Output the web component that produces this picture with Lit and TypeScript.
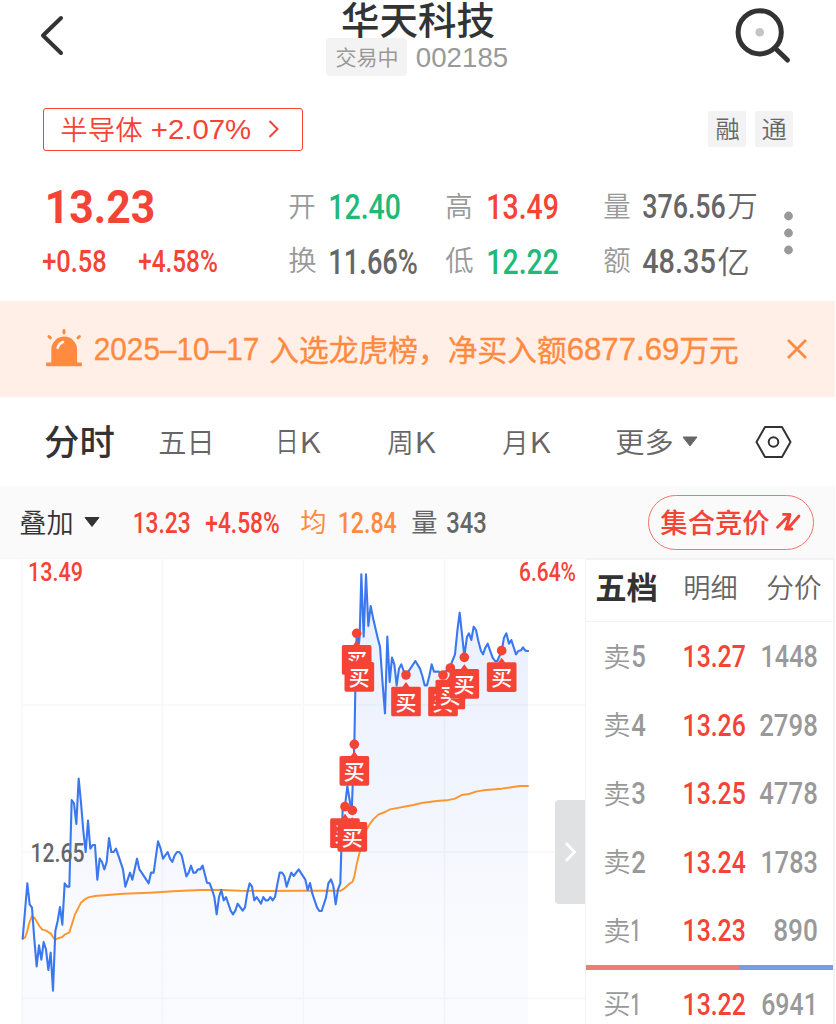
import { LitElement, html, svg, css } from "lit";
import { customElement } from "lit/decorators.js";

type Kind = "din" | "sans" | "cjk";

/* Proportions of each face: cap height and side bearing, in em. */
const FACE = {
  din: { cap: 0.711, bearing: 0.03, one: 0.055 },
  sans: { cap: 0.7, bearing: 0.05, one: 0.07 },
  cjk: { cap: 0.76, bearing: 0.03, one: 0.03 },
};

/* A run of text fitted to a given width; its box is the height of the capitals. */
function fit(text: string, width: number, size: number, cls = "", kind: Kind = "din") {
  const f = FACE[kind];
  const left = (text[0] === "1" ? f.one : f.bearing) * size * 0.85;
  const right = f.bearing * size * 0.85;
  const h = f.cap * size;
  return html`<svg class="fit ${kind} ${cls}" width=${width} height=${h}>
    <text x=${-left} y=${h} font-size=${size} textLength=${width + left + right}
      lengthAdjust="spacingAndGlyphs">${text}</text>
  </svg>`;
}
const zh = (text: string, width: number, size: number, cls = "") => fit(text, width, size, cls, "cjk");

const textStyles = css`
  .fit { display: block; overflow: visible; fill: currentColor; flex: none; }
  .din { font-family: Roboto, sans-serif; font-weight: 500; }
  .sans { font-family: "Liberation Sans", Arial, sans-serif; font-weight: 400; }
  .cjk { font-family: "Noto Sans CJK SC", sans-serif; font-weight: 350; }
  .regular { font-weight: 400; }
  .medium { font-weight: 500; }
  .bold { font-weight: 700; }
  .red { color: #f54336; }
  .green { color: #1fb978; }
  .dark { color: #333; }
  .mid { color: #666; }
  .gray { color: #999; }
  .orange { color: #ff8a40; }
`;

/* Chart series, in thirds of a pixel. */
const PRICE = `68,1148 75,1065 82,982 89,1045 96,1055 103,1150 110,1231 117,1168 124,1211 131,1158 138,1180 145,1242 152,1190 159,1304 166,1125 173,1095 180,1053 187,1106 194,982 201,992 208,992 215,732 222,742 229,804 236,668 243,740 250,825 257,888 264,794 271,878 278,867 285,867 292,971 299,908 306,918 313,940 320,918 327,846 334,888 341,888 348,878 355,898 369,940 376,992 390,950 397,971 411,908 418,940 425,950 446,982 453,950 461,950 474,856 482,878 489,908 503,888 510,908 517,918 524,898 531,888 538,888 545,898 559,961 566,950 573,929 580,950 587,950 594,940 601,940 608,929 621,980 629,982 636,1000 643,1023 650,1075 657,1023 664,1002 671,1033 678,1023 692,1064 699,1075 706,1064 713,1043 728,1064 735,1054 742,1010 749,982 756,992 763,1033 770,1023 783,1043 790,1023 797,1033 804,1033 811,1023 818,1033 825,1023 832,985 839,950 846,950 853,960 860,992 867,970 874,950 881,960 896,940 916,971 923,1002 930,981 937,1013 951,1054 958,1065 965,1065 978,1025 985,982 993,970 1000,990 1007,1045 1014,1000 1021,982 1024,880 1028,760 1035,750 1042,690 1055,770 1058,690 1063,565 1066,400 1070,232 1077,262 1079,240 1084,55 1091,242 1098,55 1105,210 1112,150 1120,190 1134,250 1140,272 1148,385 1155,472 1162,242 1169,378 1176,305 1183,325 1190,388 1197,338 1204,325 1211,345 1218,357 1225,347 1246,315 1260,338 1267,360 1274,388 1281,388 1288,360 1295,325 1302,347 1316,347 1329,357 1338,345 1351,330 1365,295 1372,225 1379,170 1386,235 1393,300 1401,242 1407,232 1414,252 1421,212 1428,222 1435,255 1443,285 1449,295 1456,275 1463,263 1470,283 1478,305 1485,315 1492,315 1505,285 1512,245 1519,232 1527,263 1534,252 1548,295 1555,285 1563,283 1569,274 1576,284 1584,285`;
const AVERAGE = `68,1148 75,1145 81,1128 88,1100 96,1080 104,1086 118,1110 127,1121 137,1123 152,1133 165,1152 173,1147 187,1143 194,1136 208,1129 216,1104 225,1075 243,1040 253,1031 265,1024 285,1020 370,1013 450,1010 520,1006 600,1002 670,1002 720,1004 800,1005 900,1004 1023,1004 1032,998 1050,982 1057,978 1063,962 1070,925 1080,885 1090,850 1100,820 1108,806 1120,790 1135,776 1155,768 1170,760 1240,747 1265,741 1310,735 1340,733 1365,728 1385,717 1407,714 1430,706 1450,703 1505,698 1560,690 1584,690`;
const BUYS = [[1070, 232], [1078, 283], [1063, 565], [1035, 752], [1057, 763], [1218, 357], [1329, 357], [1351, 336], [1393, 304], [1505, 284]];

@customElement("quote-header")
class QuoteHeader extends LitElement {
  static styles = [textStyles, css`
    :host { display: block; height: 301px; background: #fff; }
    .top { display: grid; grid-template-columns: 326px 182px 1fr; height: 100px; }
    .icon { display: block; }
    .back { margin: 14px 0 0 38px; }
    .search { margin: 6px 0 0 226px; }
    .name { padding: 5px 0 0 16px; height: 38px; box-sizing: border-box; }
    .sub { display: flex; align-items: center; gap: 10px; height: 38px; }
    .state { display: flex; align-items: center; justify-content: center; width: 81px; height: 38px; border-radius: 4px; background: #f3f3f3; }
    .tags { display: flex; align-items: center; height: 58px; padding: 0 43px 0 43px; }
    .sector { display: flex; align-items: center; width: 260px; height: 43px; box-sizing: border-box; border: 1.5px solid #f54336; border-radius: 3px; padding-left: 17px; gap: 10px; }
    .sector .icon { margin-left: 8px; }
    .spacer { flex: 1; }
    .tag { display: flex; align-items: center; justify-content: center; width: 38px; height: 36px; border-radius: 2px; background: #f3f3f3; margin-left: 9px; }
    .quote { display: flex; padding: 21px 0 0 43px; }
    .main { width: 246px; }
    .big { display: flex; align-items: center; height: 55px; padding-left: 4px; }
    .chg { display: flex; align-items: center; height: 54px; gap: 33px; }
    .stats { display: grid; grid-template-columns: 41px 116px 42px 116px 39px 146px; grid-template-rows: 55px 54px; align-items: center; }
    .vol { display: flex; align-items: center; gap: 3px; }
    .dots { margin-top: 30px; margin-left: -6px; }
  `];
  render() {
    return html`
      <div class="top">
        <svg class="icon back" width="30" height="44"><path d="M23 4 L5 21.5 L23 39" fill="none" stroke="#333" stroke-width="4" stroke-linecap="round" stroke-linejoin="round"/></svg>
        <div>
          <div class="name dark">${zh("华天科技", 152, 38, "medium")}</div>
          <div class="sub gray"><div class="state">${zh("交易中", 62, 21, "regular")}</div>${fit("002185", 90, 27, "", "sans")}</div>
        </div>
        <svg class="icon search" width="60" height="60">
          <circle cx="25.7" cy="26.3" r="21.6" fill="none" stroke="#333" stroke-width="5"/>
          <path d="M42 43 L53.5 54" stroke="#333" stroke-width="5" stroke-linecap="round"/>
          <circle cx="25.7" cy="26.3" r="4.3" fill="#c4c4c4"/>
        </svg>
      </div>
      <div class="tags">
        <div class="sector red">${zh("半导体", 81, 27)}${fit("+2.07%", 98, 28, "", "sans")}
          <svg class="icon" width="12" height="20"><path d="M1.5 2 L9.5 10 L1.5 18" fill="none" stroke="#f54336" stroke-width="2"/></svg>
        </div>
        <div class="spacer"></div>
        <div class="tag mid">${zh("融", 23, 24)}</div>
        <div class="tag mid">${zh("通", 24, 24)}</div>
      </div>
      <div class="quote">
        <div class="main red">
          <div class="big">${fit("13.23", 107, 46, "bold")}</div>
          <div class="chg">${fit("+0.58", 63, 31)}${fit("+4.58%", 78, 31)}</div>
        </div>
        <div class="stats">
          <span class="gray">${zh("开", 26, 28)}</span><span class="green">${fit("12.40", 70, 35)}</span>
          <span class="gray">${zh("高", 26, 28)}</span><span class="red">${fit("13.49", 70, 35)}</span>
          <span class="gray">${zh("量", 26, 28)}</span><span class="vol mid">${fit("376.56", 82, 34)}${zh("万", 29, 29)}</span>
          <span class="gray">${zh("换", 27, 28)}</span><span class="mid">${fit("11.66%", 87, 35)}</span>
          <span class="gray">${zh("低", 27, 28)}</span><span class="green">${fit("12.22", 70, 35)}</span>
          <span class="gray">${zh("额", 26, 28)}</span><span class="vol mid">${fit("48.35", 72, 34)}${zh("亿", 31, 31)}</span>
        </div>
        <svg class="icon dots" width="10" height="50" fill="#999"><circle cx="5.5" cy="7" r="4.4"/><circle cx="5.5" cy="24" r="4.4"/><circle cx="5.5" cy="41" r="4.4"/></svg>
      </div>`;
  }
}

@customElement("notice-bar")
class NoticeBar extends LitElement {
  static styles = [textStyles, css`
    :host { display: grid; grid-template-columns: 49px 175px 298px 112px 106px 1fr; align-items: center; width: 789px; height: 96px; padding-left: 46px; background: #ffefe6; color: #ff8a40; }
    svg { display: block; }
    .fit { stroke: currentColor; stroke-width: 0.35px; }
    .sans { margin-top: 2px; }
  `];
  render() {
    return html`
      <svg width="37" height="42">
        <path d="M5.3 35 V21.5 A12.9 12.9 0 0 1 31.1 21.5 V35 Z" fill="currentColor"/>
        <rect x="0" y="34.6" width="36" height="3.6" rx="1.2" fill="currentColor"/>
        <path d="M18 2.4 V5 M3 8.6 L4.4 9.8 M33.4 8.6 L32 9.8" stroke="currentColor" stroke-width="3" stroke-linecap="round"/>
        <path d="M11.6 19.8 Q13 15.4 17 14" fill="none" stroke="#ffefe6" stroke-width="2.6" stroke-linecap="round"/>
      </svg>
      ${fit("2025–10–17", 163, 30.5, "", "sans")}
      ${zh("入选龙虎榜，净买入额", 296, 29.6, "regular")}
      ${fit("6877.69", 110, 30.5, "", "sans")}
      ${zh("万元", 58, 29.6, "regular")}
      <svg width="22" height="22"><path d="M2 2 L20 20 M20 2 L2 20" stroke="currentColor" stroke-width="2.8"/></svg>`;
  }
}

@customElement("period-tabs")
class PeriodTabs extends LitElement {
  static styles = [textStyles, css`
    :host { display: grid; grid-template-columns: 114px 117px 112px 115px 113px 66px 73px 1fr; align-items: center; height: 89px; padding-left: 45px; background: #fff; color: #666; }
    .k { display: flex; align-items: center; gap: 2px; }
    .thin { margin-top: 1px; }
    svg { display: block; }
  `];
  render() {
    const k = (c: string) => html`<span class="k">${zh(c, c === "日" ? 22 : 25, c === "日" ? 28 : 27.5, "thin")}${fit("K", 20, 29, "thin", "cjk")}</span>`;
    return html`
      <span class="dark">${zh("分时", 69, 35, "medium")}</span>
      ${zh("五日", 55, 28.5, "thin")} ${k("日")} ${k("周")} ${k("月")} ${zh("更多", 57, 28.5, "thin")}
      <svg width="16" height="11"><path d="M1 1 H15 L8 10 Z" fill="#666" stroke="#666" stroke-linejoin="round"/></svg>
      <svg width="38" height="34"><path d="M10 2 H27 L35.5 17 L27 32 H10 L1.5 17 Z" fill="none" stroke="#333" stroke-width="2" stroke-linejoin="round"/><circle cx="18.5" cy="17" r="4.8" fill="none" stroke="#333" stroke-width="2"/></svg>`;
  }
}

@customElement("info-bar")
class InfoBar extends LitElement {
  static styles = [textStyles, css`
    :host { display: grid; grid-template-columns: 64px 50px 72px 95px 38px 73px 35px 201px 1fr; align-items: center; width: 815px; height: 72px; padding-left: 20px; background: #fafafa; }
    svg { display: block; }
    .pill { display: flex; align-items: center; gap: 6px; width: 166px; height: 55px; box-sizing: border-box; border: 1.3px solid #f0746c; border-radius: 28px; padding-left: 12px; }
  `];
  render() {
    return html`
      <span class="dark">${zh("叠加", 53, 27)}</span>
      <svg width="16" height="12"><path d="M1 1.5 H15 L8 10.5 Z" fill="#333" stroke="#333" stroke-linejoin="round"/></svg>
      <span class="red">${fit("13.23", 56, 29)}</span>
      <span class="red">${fit("+4.58%", 73, 29)}</span>
      <span class="orange">${zh("均", 25, 26, "regular")}</span>
      <span class="orange">${fit("12.84", 57, 29)}</span>
      <span class="mid">${zh("量", 25, 26, "regular")}</span>
      <span class="mid">${fit("343", 39, 29)}</span>
      <div class="pill red">${zh("集合竞价", 108, 27, "medium")}
        <svg width="26" height="20"><path d="M8.5 2.4 H15 L2.5 15.2 M17 17 H10.5 M24 4 L12.5 17 M15 3 L11 17" fill="none" stroke="#f54336" stroke-width="2.8" stroke-linecap="round" stroke-linejoin="round"/></svg>
      </div>`;
  }
}

@customElement("minute-chart")
class MinuteChart extends LitElement {
  static styles = css`
    :host { display: block; position: relative; width: 585px; height: 466px; background: #fff; }
    svg { display: block; }
    .num { font-family: Roboto, sans-serif; font-weight: 500; font-size: 26px; }
    .mark { font-family: "Noto Sans CJK SC", sans-serif; font-size: 63px; font-weight: 500; fill: #fff; text-anchor: middle; }
    .handle { position: absolute; right: 0; top: 242px; width: 30px; height: 104px; border-radius: 4px 0 0 4px; background: #e0e1e2; display: flex; align-items: center; justify-content: center; }
  `;
  render() {
    return html`
      <svg width="585" height="466" viewBox="0 558 585 466">
        <defs><linearGradient id="fill" gradientUnits="userSpaceOnUse" x1="0" y1="50" x2="0" y2="1404">
          <stop offset="0" stop-color="#e9f0fd"/><stop offset=".5" stop-color="#f1f5fe"/><stop offset=".75" stop-color="#f9fafe"/><stop offset="1" stop-color="#f9fbff"/>
        </linearGradient></defs>
        <g transform="translate(0 556) scale(.333333)"><path d="M${PRICE} 1584,285 V1404 H66 V1148 Z" fill="url(#fill)"/></g>
        <path d="M0 558.5 H585 M22 705 H585 M22 852 H585 M22 998.5 H585 M22 559 V1024 M162.5 559 V1024 M303.5 559 V1024 M444.5 559 V1024" stroke="#50608a" stroke-opacity=".05" stroke-width="1.3"/>
        <g transform="translate(0 556) scale(.333333)" stroke-linejoin="round" stroke-linecap="round">
          <polyline points=${AVERAGE} fill="none" stroke="#ff952d" stroke-width="5.8"/>
          <polyline points=${PRICE} fill="none" stroke="#3b78ef" stroke-width="6.3"/>
          ${BUYS.map(([x, y]) => svg`<circle cx=${x} cy=${y} r="14.5" fill="#f54336"/>`)}
          ${BUYS.map(([x, y]) => svg`
            <g fill="#f54336">
              <path d="M${x - 11} ${y + 36} L${x} ${y + 21} L${x + 11} ${y + 36} Z"/>
              <rect x=${x - 44.5} y=${y + 35} width="89" height="89" rx="5"/>
              <text class="mark" x=${x} y=${y + 104}>买</text>
            </g>`)}
        </g>
        <text class="num" x="30.5" y="861.5" textLength="54" lengthAdjust="spacingAndGlyphs" fill="#666">12.65</text>
        <text class="num" x="28" y="581" textLength="55" lengthAdjust="spacingAndGlyphs" fill="#f54336">13.49</text>
        <text class="num" x="519" y="581" textLength="57" lengthAdjust="spacingAndGlyphs" fill="#f54336">6.64%</text>
      </svg>
      <div class="handle"><svg width="12" height="22"><path d="M2 2 L10.5 11 L2 20" fill="none" stroke="#fff" stroke-width="2.8"/></svg></div>`;
  }
}

@customElement("order-book")
class OrderBook extends LitElement {
  static styles = [textStyles, css`
    :host { display: block; width: 250px; height: 466px; box-sizing: border-box; border: solid #f3f3f3; border-width: 2px 2px 0 1px; background: #fff; overflow: hidden; }
    .head { display: grid; grid-template-columns: 88px 83px 1fr; align-items: center; height: 54px; padding: 0 0 7px 10px; border-bottom: 1px solid #f3f3f3; }
    .row { display: grid; grid-template-columns: 80px 61px 72px; align-items: center; height: 68.5px; padding-left: 18px; }
    .side { display: flex; align-items: center; gap: 2px; }
    .qty { justify-self: end; }
    .bar { display: grid; grid-template-columns: 154px 1fr; height: 5px; }
    .sell { background: #ee7d75; }
    .buy { background: #789be9; }
  `];
  row(side: string, n: string, price: string, qty: string, w: number) {
    return html`<div class="row gray">
      <span class="side">${zh(side, 26, 27)}${fit(n, n === "1" ? 8 : 13, 31)}</span>
      <span class="red">${fit(price, 61, 31)}</span>
      <span class="qty">${fit(qty, w, 31)}</span>
    </div>`;
  }
  render() {
    return html`
      <div class="head mid"><span class="dark">${zh("五档", 61, 31, "bold")}</span>${zh("明细", 53, 27)}${zh("分价", 54, 27)}</div>
      <div>
        ${this.row("卖", "5", "13.27", "1448", 55)}
        ${this.row("卖", "4", "13.26", "2798", 57)}
        ${this.row("卖", "3", "13.25", "4778", 57)}
        ${this.row("卖", "2", "13.24", "1783", 55)}
        ${this.row("卖", "1", "13.23", "890", 43)}
      </div>
      <div class="bar"><div class="sell"></div><div class="buy"></div></div>
      ${this.row("买", "1", "13.22", "6941", 55)}`;
  }
}

@customElement("app-root")
class AppRoot extends LitElement {
  static styles = css`
    :host { display: block; width: 836px; height: 1024px; background: #fff; overflow: hidden; }
    .body { display: flex; }
  `;
  render() {
    return html`
      <quote-header></quote-header>
      <notice-bar></notice-bar>
      <period-tabs></period-tabs>
      <info-bar></info-bar>
      <div class="body"><minute-chart></minute-chart><order-book></order-book></div>`;
  }
}
